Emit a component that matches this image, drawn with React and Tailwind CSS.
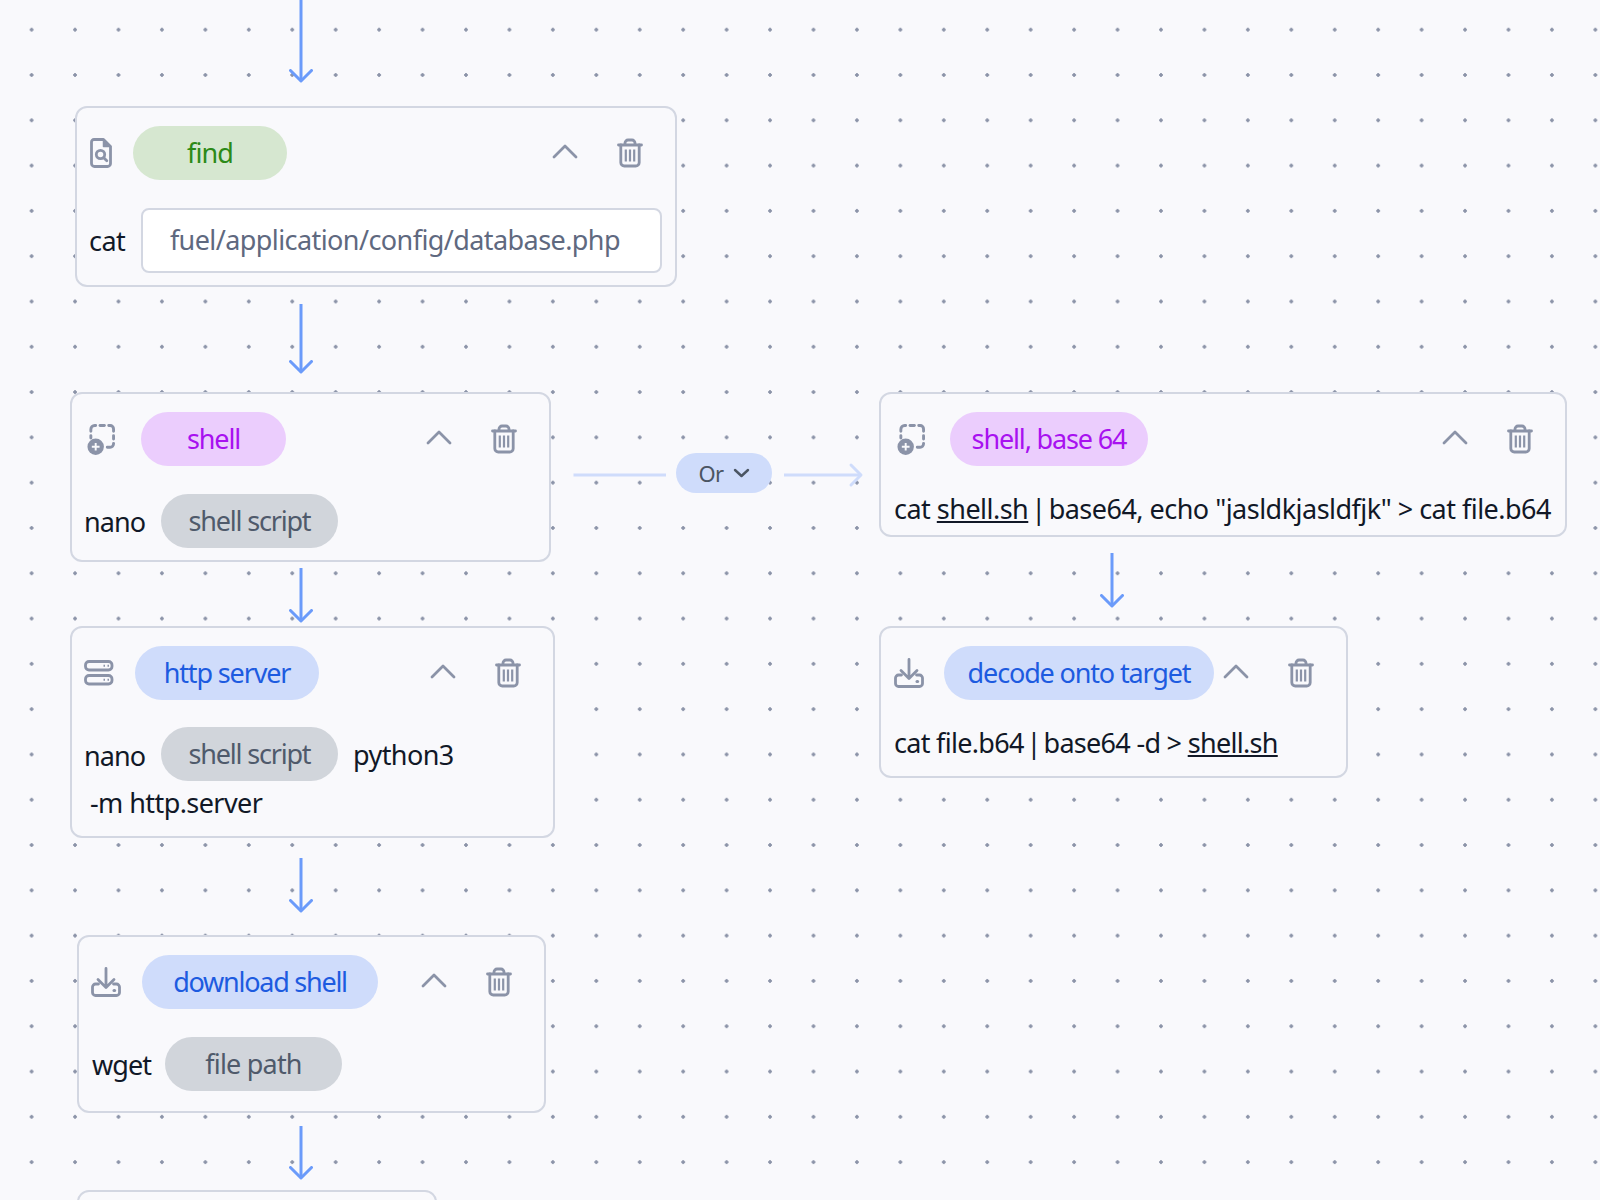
const Trash = () => (
  <svg width="26" height="30" viewBox="0 0 26 30" fill="none" stroke="#8b93a8" strokeWidth="2.800" strokeLinecap="round" strokeLinejoin="round" className="shrink-0">
    <path d="M1.500 7H24.500" />
    <path d="M8 6.500V5a3 3 0 0 1 3-3h4a3 3 0 0 1 3 3v1.500" />
    <path d="M3.800 7V24.500a3.500 3.500 0 0 0 3.500 3.500h11.400a3.500 3.500 0 0 0 3.500-3.500V7" />
    <path d="M8.800 11.500V23.500M13 11.500V23.500M17.200 11.500V23.500" strokeWidth="2.200" strokeLinecap="butt" />
  </svg>
);

const Chevron = () => (
  <svg width="26" height="15" viewBox="0 0 26 15" fill="none" stroke="#8b93a8" strokeWidth="2.800" strokeLinecap="round" strokeLinejoin="round" className="shrink-0 mb-[3px]">
    <path d="M2 13L13 2L24 13" />
  </svg>
);

const FileSearch = () => (
  <svg width="22" height="30" viewBox="0 0 22 30" fill="none" stroke="#8b93a8" strokeWidth="2.800" strokeLinejoin="round" strokeLinecap="round" className="shrink-0">
    <path d="M4 1.500H13.500L20.500 8.500V25.500a3 3 0 0 1-3 3H4.500a3 3 0 0 1-3-3V4a2.500 2.500 0 0 1 2.500-2.500Z" />
    <path d="M13.500 2V8.500H20.500" fill="#8b93a8" strokeWidth="1.500" />
    <circle cx="10.500" cy="16.500" r="4.200" />
    <path d="M13.700 19.700L16.800 22.800" />
  </svg>
);

const ShellIcon = () => (
  <svg width="28" height="33" viewBox="0 0 29 33" fill="none" stroke="#8b93a8" strokeWidth="3" strokeLinecap="round" className="shrink-0">
    <path d="M4 8V6a4 4 0 0 1 4-4h1" />
    <path d="M13.500 2H18" />
    <path d="M22.500 2H24a3.500 3.500 0 0 1 3.500 3.500V8" />
    <path d="M27.500 12.500V16" />
    <path d="M27.500 20.500V21a3.500 3.500 0 0 1-3.500 3.500H21" />
    <path d="M4 12.500V15" />
    <circle cx="9" cy="24" r="8.500" fill="#8b93a8" stroke="none" />
    <path d="M9 20V28M5 24H13" stroke="#f9f9fc" strokeWidth="2" strokeLinecap="butt" />
  </svg>
);

const ServerIcon = () => (
  <svg width="30" height="26" viewBox="0 0 30 26" fill="none" stroke="#8b93a8" className="shrink-0">
    <rect x="1.500" y="1.500" width="26.500" height="8.500" rx="3.500" strokeWidth="2.800" />
    <rect x="1.500" y="15.500" width="26.500" height="8.500" rx="3.500" strokeWidth="2.800" />
    <path d="M19.500 5.800H21M23.500 5.800H25M19.500 19.800H21M23.500 19.800H25" strokeWidth="2" />
  </svg>
);

const DownloadIcon = () => (
  <svg width="30" height="30" viewBox="0 0 30 30" fill="none" stroke="#8b93a8" strokeWidth="2.800" strokeLinecap="round" strokeLinejoin="round" className="shrink-0">
    <path d="M15 1.500V20.500M7 12.500L15 20.500L23 12.500" />
    <path d="M7.500 17H4.500a3 3 0 0 0-3 3V25.500a3 3 0 0 0 3 3H25.500a3 3 0 0 0 3-3V20a3 3 0 0 0-3-3H22.500" />
    <path d="M23 23.500H23.600" strokeWidth="3" />
  </svg>
);

const ArrowDown = ({ className }) => (
  <svg viewBox="0 0 24 100" preserveAspectRatio="none" className={className} fill="none">
    <line x1="12" y1="0" x2="12" y2="100" stroke="#6b9bfa" strokeWidth="3" vectorEffect="non-scaling-stroke" />
  </svg>
);

const Head = ({ className }) => (
  <svg width="24" height="14" viewBox="0 0 24 14" className={className} fill="none">
    <path d="M1.500 1.500L12 12L22.500 1.500" stroke="#6b9bfa" strokeWidth="3" strokeLinecap="round" strokeLinejoin="round" />
  </svg>
);

const font = "font-['Noto_Sans',sans-serif]";

export default function App() {
  return (
    <div className={`relative w-[1600px] h-[1200px] overflow-hidden bg-[#f9f9fc] bg-[radial-gradient(circle,#8b93a8_1.5px,transparent_2px)] bg-[size:43.45px_45.3px] bg-[position:9.9px_7.05px] ${font} text-[27px] text-[#111827] tracking-[-0.58px]`}>
      {/* connectors */}
      <ArrowDown className="absolute left-[289px] top-0 w-6 h-[81px]" />
      <Head className="absolute left-[289px] top-[69px]" />
      <ArrowDown className="absolute left-[289px] top-[304px] w-6 h-[68px]" />
      <Head className="absolute left-[289px] top-[360px]" />
      <ArrowDown className="absolute left-[289px] top-[568px] w-6 h-[53px]" />
      <Head className="absolute left-[289px] top-[609px]" />
      <ArrowDown className="absolute left-[289px] top-[858px] w-6 h-[53px]" />
      <Head className="absolute left-[289px] top-[899px]" />
      <ArrowDown className="absolute left-[289px] top-[1126px] w-6 h-[52px]" />
      <Head className="absolute left-[289px] top-[1166px]" />
      <ArrowDown className="absolute left-[1100px] top-[553px] w-6 h-[53px]" />
      <Head className="absolute left-[1100px] top-[594px]" />

      <svg width="292" height="30" viewBox="0 0 292 30" fill="none" className="absolute left-[572.500px] top-[460px]" stroke="#cfdcfb" strokeWidth="3">
        <path d="M0.500 15H93" />
        <path d="M211 15H287" />
        <path d="M278 5L288 15L278 25" strokeLinecap="round" strokeLinejoin="round" />
      </svg>
      <div className="absolute left-[676px] top-[453px] w-24 h-10 rounded-full bg-[#cfdcfb] flex items-center justify-center gap-[9px] text-[22px] text-[#4b5563] tracking-[-0.6px]">
        <span>Or</span>
        <svg width="17" height="10" viewBox="0 0 17 10" fill="none" stroke="#4b5563" strokeWidth="2.400" strokeLinecap="round" strokeLinejoin="round">
          <path d="M2 2L8.500 8L15 2" />
        </svg>
      </div>

      {/* find */}
      <div className="absolute left-[75px] top-[106px] w-[602px] h-[181px] flex flex-col border-2 border-[#d3d7e2] rounded-xl bg-[#f9f9fc] pt-[18px] pl-[13px] pr-[13px]">
        <div className="flex items-center h-[54px]">
          <FileSearch />
          <div className="ml-[21px] w-[154px] h-[54px] rounded-full bg-[#d6e7d0] text-[#2c8a17] tracking-[-0.9px] flex items-center justify-center">find</div>
          <div className="ml-auto mr-[19px] flex items-center gap-[39px]"><Chevron /><Trash /></div>
        </div>
        <div className="flex items-center mt-[28px]">
          <span className="ml-[-1px] w-[52px] mt-[2px]">cat</span>
          <div className="w-[522px] h-[65px] rounded-lg bg-white border-2 border-[#d3d7e2] flex items-center pl-[27px] text-[#5f697f]">fuel/application/config/database.php</div>
        </div>
      </div>

      {/* shell */}
      <div className="absolute left-[70px] top-[392px] w-[481px] h-[170px] flex flex-col border-2 border-[#d3d7e2] rounded-xl bg-[#f9f9fc] pt-[18px] pl-[15px] pr-[13px]">
        <div className="flex items-center h-[54px]">
          <ShellIcon />
          <div className="ml-[26px] w-[145px] h-[54px] rounded-full bg-[#ebcdfd] text-[#a811f0] tracking-[-1.15px] flex items-center justify-center">shell</div>
          <div className="ml-auto mr-[19px] flex items-center gap-[39px]"><Chevron /><Trash /></div>
        </div>
        <div className="flex items-center mt-[28px]">
          <span className="w-[62px] ml-[-3px] mt-[3px] tracking-[-0.9px]">nano</span>
          <div className="ml-[15px] w-[177px] h-[54px] rounded-full bg-[#d1d5db] text-[#4f5a6b] tracking-[-1.2px] flex items-center justify-center">shell script</div>
        </div>
      </div>

      {/* http server */}
      <div className="absolute left-[70px] top-[626px] w-[485px] h-[212px] flex flex-col border-2 border-[#d3d7e2] rounded-xl bg-[#f9f9fc] pt-[18px] pl-[12px] pr-[13px]">
        <div className="flex items-center h-[54px]">
          <ServerIcon />
          <div className="ml-[21px] w-[184px] h-[54px] rounded-full bg-[#cfdcfb] text-[#1d5be0] tracking-[-1.15px] flex items-center justify-center">http server</div>
          <div className="ml-auto mr-[19px] flex items-center gap-[39px]"><Chevron /><Trash /></div>
        </div>
        <div className="flex items-center mt-[27px]">
          <span className="w-[62px] mt-[4px] tracking-[-0.9px]">nano</span>
          <div className="ml-[15px] w-[177px] h-[54px] rounded-full bg-[#d1d5db] text-[#4f5a6b] tracking-[-1.2px] flex items-center justify-center">shell script</div>
          <span className="ml-[15px] mt-[2px]">python3</span>
        </div>
        <div className="ml-[6px] mt-[2px]">-m http.server</div>
      </div>

      {/* download shell */}
      <div className="absolute left-[77px] top-[935px] w-[469px] h-[178px] flex flex-col border-2 border-[#d3d7e2] rounded-xl bg-[#f9f9fc] pt-[18px] pl-[12px] pr-[13px]">
        <div className="flex items-center h-[54px]">
          <DownloadIcon />
          <div className="ml-[21px] w-[236px] h-[54px] rounded-full bg-[#cfdcfb] text-[#1d5be0] tracking-[-1.25px] flex items-center justify-center">download shell</div>
          <div className="ml-auto mr-[19px] flex items-center gap-[39px]"><Chevron /><Trash /></div>
        </div>
        <div className="flex items-center mt-[28px]">
          <span className="w-[73px] mt-[3px] ml-[1px] tracking-[-0.9px]">wget</span>
          <div className="w-[177px] h-[54px] rounded-full bg-[#d1d5db] text-[#4f5a6b] tracking-[-0.8px] flex items-center justify-center">file path</div>
        </div>
      </div>

      {/* next card, cropped by the viewport */}
      <div className="absolute left-[77px] top-[1190px] w-[360px] h-[60px] border-2 border-[#d3d7e2] rounded-xl bg-[#f9f9fc]" />

      {/* shell, base 64 */}
      <div className="absolute left-[879px] top-[392px] w-[688px] h-[145px] flex flex-col border-2 border-[#d3d7e2] rounded-xl bg-[#f9f9fc] pt-[18px] pl-[13px] pr-[13px]">
        <div className="flex items-center h-[54px]">
          <div className="ml-[3px]"><ShellIcon /></div>
          <div className="ml-[25px] w-[198px] h-[54px] rounded-full bg-[#ebcdfd] text-[#a811f0] tracking-[-1.15px] flex items-center justify-center">shell, base 64</div>
          <div className="ml-auto mr-[19px] flex items-center gap-[39px]"><Chevron /><Trash /></div>
        </div>
        <div className="mt-[23px] whitespace-nowrap tracking-[-0.52px]">cat <span className="underline">shell.sh</span><span className="[word-spacing:-3.500px]"> | </span>base64, echo "jasldkjasldfjk" &gt; cat file.b64</div>
      </div>

      {/* decode onto target */}
      <div className="absolute left-[879px] top-[626px] w-[469px] h-[152px] flex flex-col border-2 border-[#d3d7e2] rounded-xl bg-[#f9f9fc] pt-[18px] pl-[13px] pr-[13px]">
        <div className="flex items-center h-[54px]">
          <DownloadIcon />
          <div className="ml-[20px] w-[270px] h-[54px] rounded-full bg-[#cfdcfb] text-[#1d5be0] tracking-[-1.15px] flex items-center justify-center">decode onto target</div>
          <div className="ml-[9px] flex items-center gap-[39px]"><Chevron /><Trash /></div>
        </div>
        <div className="mt-[23px] whitespace-nowrap tracking-[-0.7px]">cat file.b64<span className="[word-spacing:-3.500px]"> | </span>base64 -d &gt; <span className="underline">shell.sh</span></div>
      </div>
    </div>
  );
}
